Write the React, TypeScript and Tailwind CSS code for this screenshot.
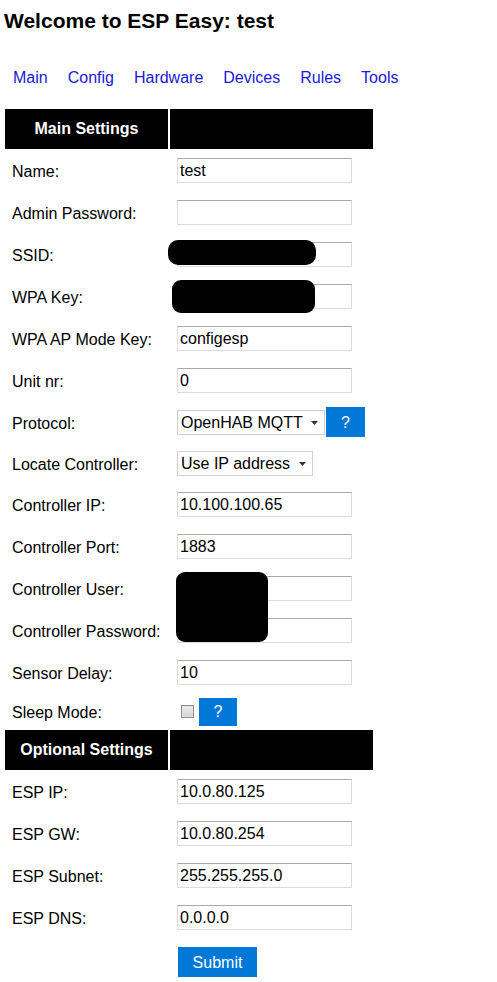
import React from 'react';

const font = "font-['Liberation_Sans',Arial,sans-serif]";

function TextBox({ value = '' }: { value?: string }) {
  return (
    <div className="w-[175px] h-[25px] border border-[#dcdcdc] border-t-[#a9a9a9] bg-white pl-[2px] pt-[2px] flex items-center text-[16px] leading-[18px] text-black">
      {value}
    </div>
  );
}

function FakeSelect({ value, width }: { value: string; width: string }) {
  return (
    <div className={`${width} h-[25px] border border-[#cfcfcf] bg-white pl-[3px] pr-[6px] flex items-center justify-between text-[16px] leading-[18px]`}>
      <span className="pt-[2px]">{value}</span>
      <svg width="7" height="4" viewBox="0 0 7 4" className="mt-[1px]">
        <path d="M0 0h7L3.5 4z" fill="#333" />
      </svg>
    </div>
  );
}

function HelpButton({ size }: { size: string }) {
  return (
    <div className={`${size} bg-[#0078d7] text-white flex items-center justify-center text-[16px] pt-[1px]`}>?</div>
  );
}

function Row({
  label,
  height = 'h-[42px]',
  align = 'items-center',
  children,
}: {
  label?: string;
  height?: string;
  align?: string;
  children: React.ReactNode;
}) {
  return (
    <div className={`grid grid-cols-[163px_203px] gap-x-[2px] ${height}`}>
      <div className="px-[7px] pt-[3px] flex items-center text-[16px] leading-[18px]">{label}</div>
      <div className={`relative px-[7px] flex ${align}`}>{children}</div>
    </div>
  );
}

function Header({ title }: { title: string }) {
  return (
    <div className="grid grid-cols-[163px_203px] gap-x-[2px] h-[40px]">
      <div className="bg-black text-white font-bold text-[16px] flex items-center justify-center">{title}</div>
      <div className="bg-black" />
    </div>
  );
}

export default function App() {
  return (
    <div className={`${font} bg-white text-black w-[497px] min-h-[982px]`}>
      <h1 className="text-[21px] font-bold leading-[24px] pl-[4px] pt-[9px]">Welcome to ESP Easy: test</h1>

      <nav className="flex pl-[3px] mt-[36px] text-[16px] leading-[18px] text-[#1a1ad6]">
        {['Main', 'Config', 'Hardware', 'Devices', 'Rules', 'Tools'].map((l) => (
          <a key={l} href="#" className="px-[10px]">
            {l}
          </a>
        ))}
      </nav>

      <div className="ml-[5px] mt-[22px] w-[368px]">
        <Header title="Main Settings" />
        <Row label="Name:">
          <TextBox value="test" />
        </Row>
        <Row label="Admin Password:">
          <TextBox />
        </Row>
        <Row label="SSID:">
          <TextBox />
          <div className="absolute left-[-2px] top-[7px] w-[148px] h-[25px] bg-black rounded-[10px]" />
        </Row>
        <Row label="WPA Key:">
          <TextBox />
          <div className="absolute left-[2px] top-[5px] w-[143px] h-[33px] bg-black rounded-[9px]" />
        </Row>
        <Row label="WPA AP Mode Key:">
          <TextBox value="configesp" />
        </Row>
        <Row label="Unit nr:">
          <TextBox value="0" />
        </Row>
        <Row label="Protocol:">
          <div className="flex items-center gap-[1px]">
            <FakeSelect value="OpenHAB MQTT" width="w-[148px]" />
            <HelpButton size="w-[39px] h-[30px]" />
          </div>
        </Row>
        <Row label="Locate Controller:" height="h-[40px]">
          <FakeSelect value="Use IP address" width="w-[136px]" />
        </Row>
        <Row label="Controller IP:">
          <TextBox value="10.100.100.65" />
        </Row>
        <Row label="Controller Port:">
          <TextBox value="1883" />
        </Row>
        <Row label="Controller User:">
          <TextBox />
          <div className="absolute left-[6px] top-[5px] w-[92px] h-[70px] bg-black rounded-[9px] z-10" />
        </Row>
        <Row label="Controller Password:">
          <TextBox />
        </Row>
        <Row label="Sensor Delay:">
          <TextBox value="10" />
        </Row>
        <Row label="Sleep Mode:" height="h-[37px]">
          <div className="flex items-center">
            <div className="ml-[4px] w-[13px] h-[13px] border border-[#8c8c8c] bg-[#e2e2e2] p-[1px]">
              <div className="w-full h-full bg-gradient-to-b from-[#ececec] to-[#d4d4d4]" />
            </div>
            <div className="ml-[5px]">
              <HelpButton size="w-[38px] h-[28px]" />
            </div>
          </div>
        </Row>
        <Header title="Optional Settings" />
        <Row label="ESP IP:">
          <TextBox value="10.0.80.125" />
        </Row>
        <Row label="ESP GW:">
          <TextBox value="10.0.80.254" />
        </Row>
        <Row label="ESP Subnet:">
          <TextBox value="255.255.255.0" />
        </Row>
        <Row label="ESP DNS:">
          <TextBox value="0.0.0.0" />
        </Row>
        <Row height="h-[43px]" align="items-start pt-[9px]">
          <button className="ml-[1px] w-[79px] h-[30px] bg-[#0078d7] text-white text-[16px] pt-[1px]">Submit</button>
        </Row>
      </div>
    </div>
  );
}
